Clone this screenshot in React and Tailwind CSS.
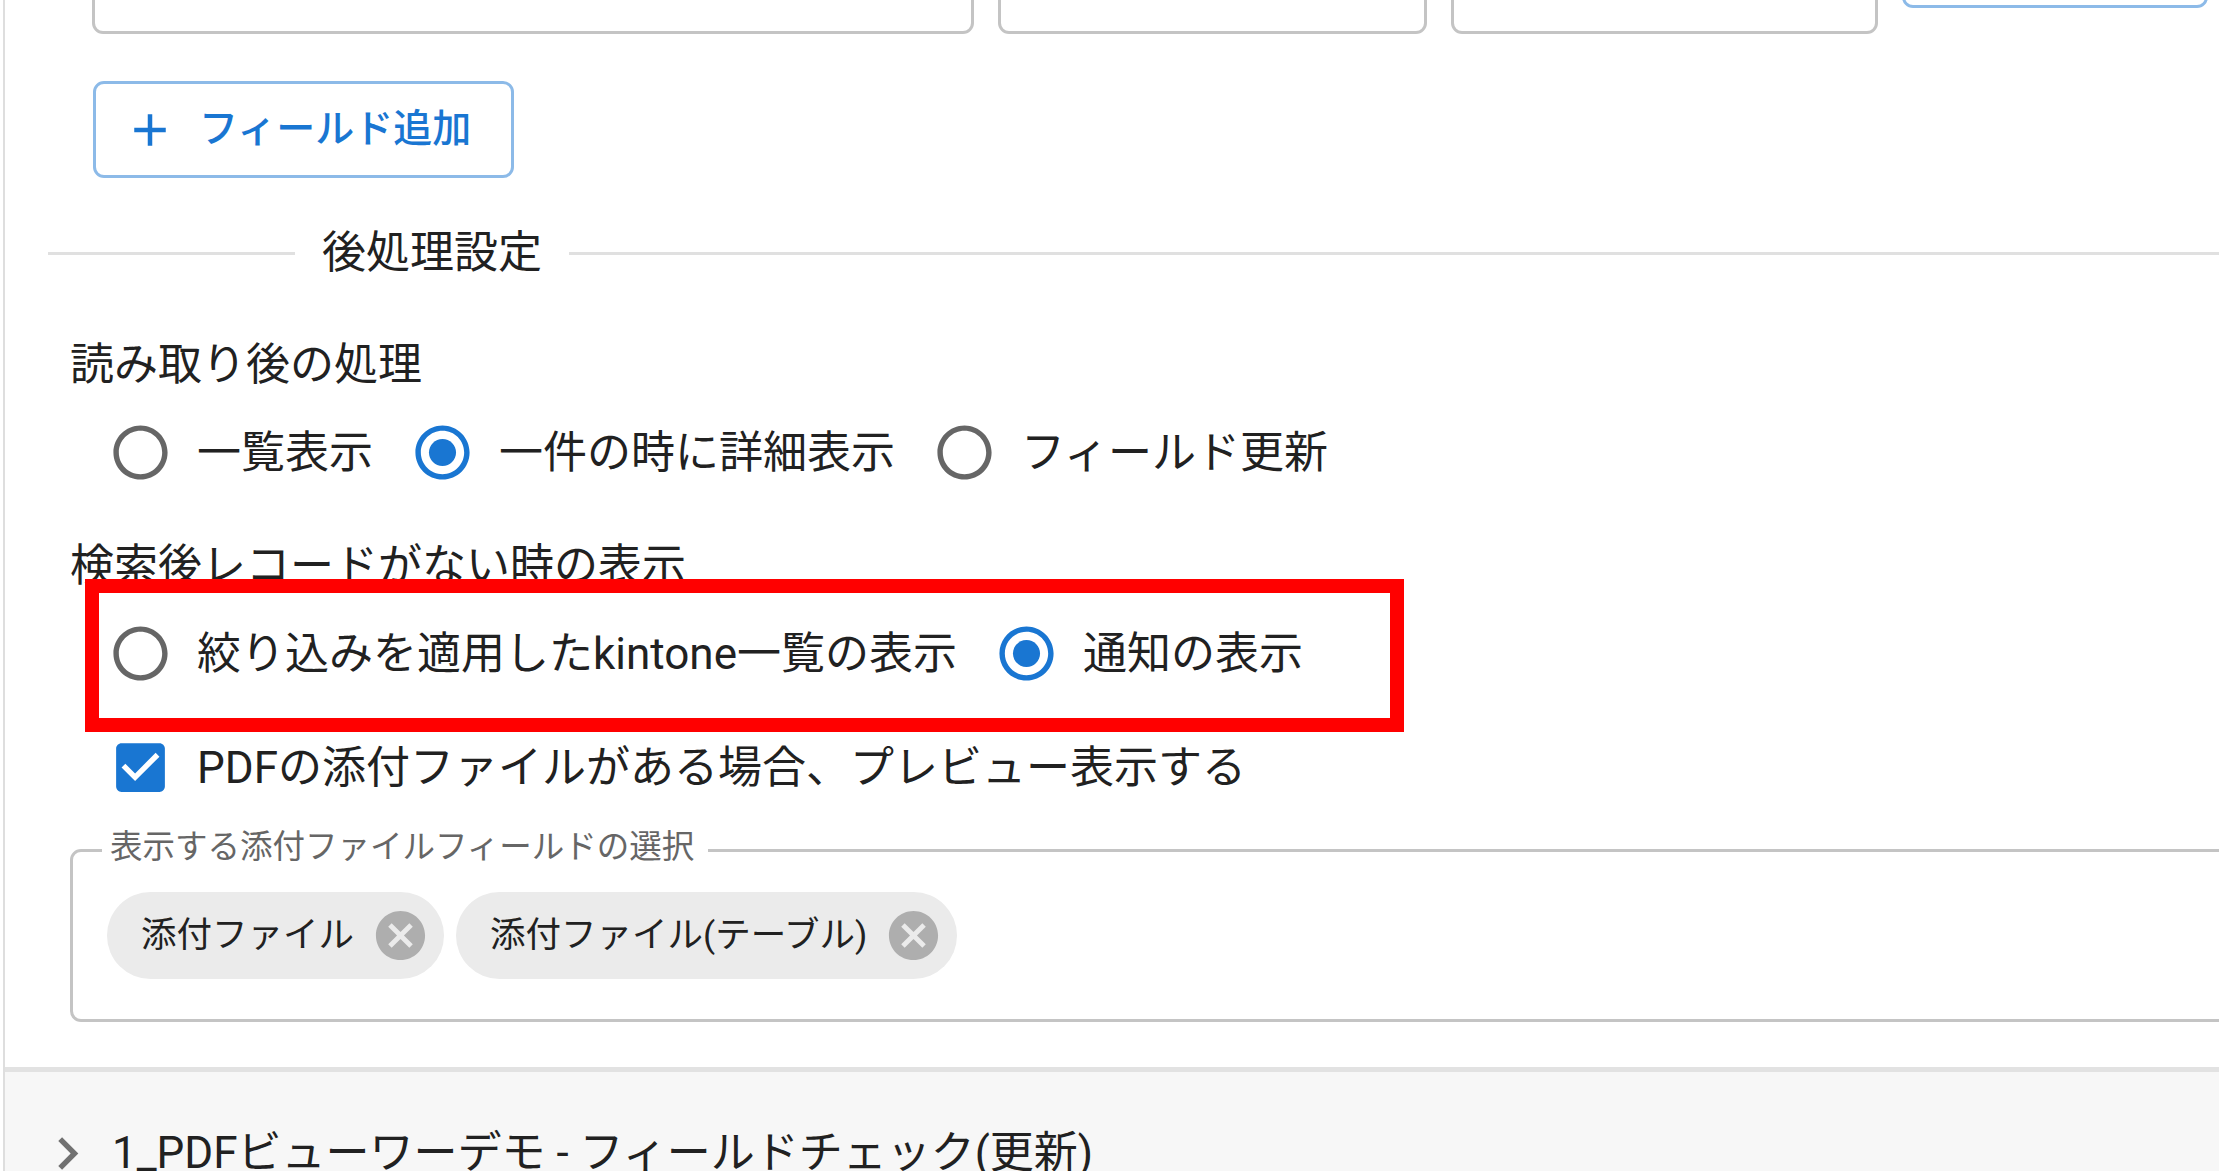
import React from "react";

const font = { fontFamily: 'Roboto, "Noto Sans CJK JP", sans-serif' };

function RadioIcon({ checked }) {
  return (
    <svg viewBox="0 0 24 24" className="w-[65px] h-[65px]" fill={checked ? "#1976d2" : "rgba(0,0,0,0.6)"}>
      <path d="M12 2C6.48 2 2 6.48 2 12s4.48 10 10 10 10-4.48 10-10S17.52 2 12 2zm0 18c-4.42 0-8-3.58-8-8s3.58-8 8-8 8 3.58 8 8-3.58 8-8 8z" />
      {checked && <path d="M12 7c-2.76 0-5 2.24-5 5s2.24 5 5 5 5-2.24 5-5-2.24-5-5-5z" />}
    </svg>
  );
}

function RadioOption({ label, checked }) {
  return (
    <label className="flex items-center">
      <span className="w-[113px] h-[113px] flex items-center justify-center">
        <RadioIcon checked={checked} />
      </span>
      <span className="text-[44px] leading-[64px] text-[#212121] whitespace-nowrap">{label}</span>
    </label>
  );
}

function RadioRow({ options, value }) {
  return (
    <div className="flex items-center gap-[13px] ml-[79px]">
      {options.map((o) => (
        <RadioOption key={o} label={o} checked={o === value} />
      ))}
    </div>
  );
}

function Chip({ label }) {
  return (
    <div className="h-[87px] rounded-full bg-[#ebebeb] flex items-center">
      <span className="pl-[34px] pr-[33px] text-[35.5px] text-[#212121] whitespace-nowrap">{label}</span>
      <svg viewBox="0 0 24 24" className="w-[59px] h-[59px] -ml-[16px] mr-[14px]" fill="rgba(0,0,0,0.26)">
        <path d="M12 2C6.47 2 2 6.47 2 12s4.47 10 10 10 10-4.47 10-10S17.53 2 12 2zm5 13.59L15.59 17 12 13.41 8.41 17 7 15.59 10.59 12 7 8.41 8.41 7 12 10.59 15.59 7 17 8.41 13.41 12 17 15.59z" />
      </svg>
    </div>
  );
}

export default function App() {
  return (
    <div className="w-[2219px] h-[1171px] overflow-hidden bg-white relative pl-[3px]" style={font}>
      <div className="h-full border-l-2 border-[#dedede] flex flex-col [&>*]:shrink-0">
        {/* fields row (cut at top) */}
        <div className="flex items-start gap-[24px] ml-[87px] -mt-[66px]">
          <div className="w-[882px] h-[100px] border-[3px] border-[#c4c4c4] rounded-[11px]" />
          <div className="w-[429px] h-[100px] border-[3px] border-[#c4c4c4] rounded-[11px]" />
          <div className="w-[427px] h-[100px] border-[3px] border-[#c4c4c4] rounded-[11px]" />
          <div className="w-[306px] h-[74px] border-[3px] border-[#8cbae8] rounded-[11px]" />
        </div>

        <button className="mt-[47px] ml-[88px] w-[421px] h-[97px] border-[3px] border-[#8cbae8] rounded-[11px] flex items-center pl-[27px] gap-[22px] text-[#1976d2] text-[39px] font-medium">
          <svg viewBox="0 0 24 24" className="w-[54px] h-[54px]" fill="currentColor">
            <path d="M19 13h-6v6h-2v-6H5v-2h6V5h2v6h6v2z" />
          </svg>
          <span>フィールド追加</span>
        </button>

        <div className="mt-[43px] ml-[43px] h-[64px] flex items-center">
          <div className="w-[247px] h-[3px] bg-[#e0e0e0]" />
          <span className="px-[27px] text-[44px] text-[#212121] whitespace-nowrap">後処理設定</span>
          <div className="flex-1 h-[3px] bg-[#e0e0e0]" />
        </div>

        <div className="mt-[48px] ml-[65px] text-[44px] leading-[64px] text-[#212121]">読み取り後の処理</div>
        <div className="-mt-[1px]">
          <RadioRow options={["一覧表示", "一件の時に詳細表示", "フィールド更新"]} value="一件の時に詳細表示" />
        </div>

        <div className="mt-[25px] ml-[65px] text-[44px] leading-[64px] text-[#212121]">検索後レコードがない時の表示</div>
        <div className="-mt-[1px]">
          <RadioRow options={["絞り込みを適用したkintone一覧の表示", "通知の表示"]} value="通知の表示" />
        </div>

        <label className="mt-[1px] ml-[79px] flex items-center">
          <span className="w-[113px] h-[113px] flex items-center justify-center">
            <svg viewBox="0 0 24 24" className="w-[65px] h-[65px]" fill="#1976d2">
              <path d="M19 3H5c-1.11 0-2 .9-2 2v14c0 1.1.89 2 2 2h14c1.11 0 2-.9 2-2V5c0-1.1-.89-2-2-2zm-9 14l-5-5 1.41-1.41L10 14.17l7.59-7.59L19 8l-9 9z" />
            </svg>
          </span>
          <span className="text-[44px] leading-[64px] text-[#212121]">PDFの添付ファイルがある場合、プレビュー表示する</span>
        </label>

        <fieldset className="mt-[10px] ml-[65px] w-[2300px] border-[3px] border-[#c4c4c4] rounded-[11px] pb-[40px]">
          <legend className="ml-[29px] pl-[8px] pr-[14px] text-[32.5px] leading-[32px] text-[#666666]">
            <span className="relative -top-[3px]">表示する添付ファイルフィールドの選択</span>
          </legend>
          <div className="mt-[26px] pl-[34px] flex gap-[12px]">
            <Chip label="添付ファイル" />
            <Chip label="添付ファイル(テーブル)" />
          </div>
        </fieldset>

        <div className="mt-[45px] !shrink flex-1 border-t-[5px] border-[#e2e2e2] bg-[#f7f7f7]">
          <div className="pt-[49px] pl-[30px] flex items-start gap-[12px]">
            <svg viewBox="0 0 24 24" className="w-[65px] h-[65px] shrink-0" fill="rgba(0,0,0,0.54)">
              <path d="M10 6 8.59 7.41 13.17 12l-4.58 4.59L10 18l6-6z" />
            </svg>
            <span className="text-[44px] leading-[64px] text-[#212121] whitespace-nowrap">1_PDFビューワーデモ - フィールドチェック(更新)</span>
          </div>
        </div>
      </div>

      {/* annotation */}
      <div className="absolute left-[85px] top-[579px] w-[1319px] h-[153px] border-[14px] border-[#ff0000] pointer-events-none" />
    </div>
  );
}
